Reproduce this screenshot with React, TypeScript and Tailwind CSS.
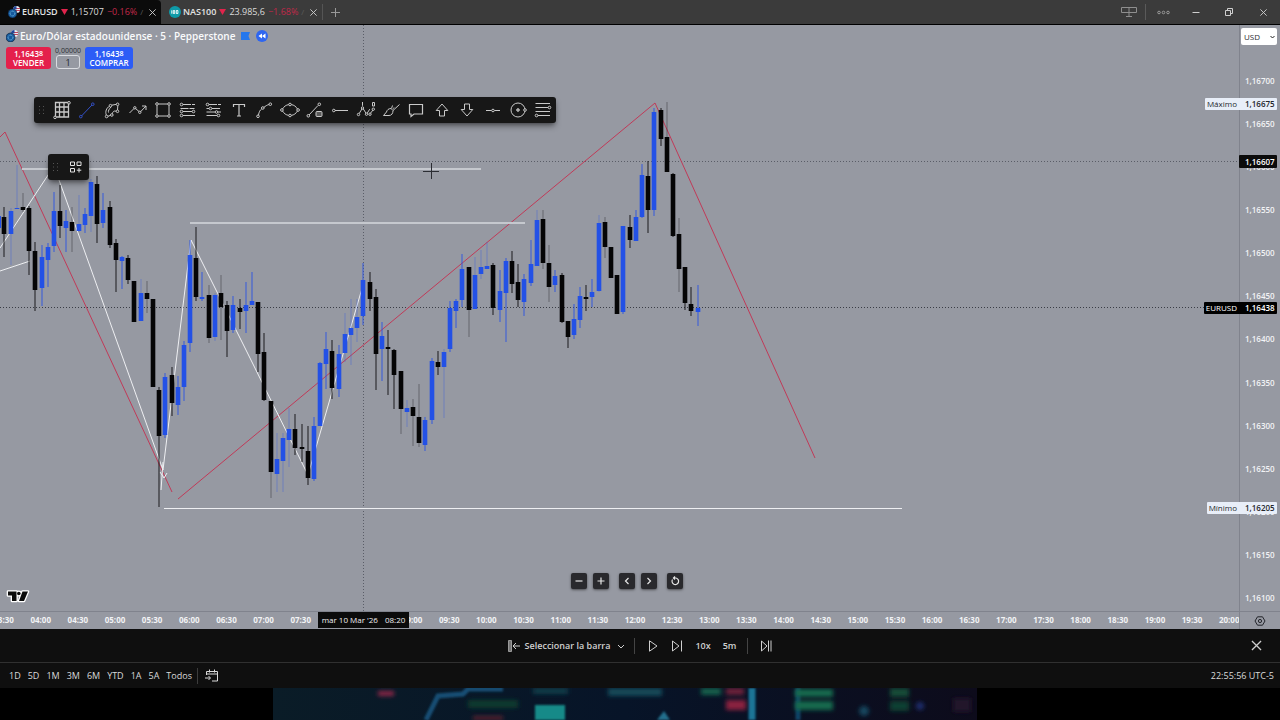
import { useState } from "react";
import type { ReactNode } from "react";
import clsx from "clsx";

type Candle = [high: number, top: number, bottom: number, low: number, up: 0 | 1];

const CANDLE_STEP = 6.19;
const CANDLE_START = 4.4;

const candles: Candle[] = [
  [207, 217, 234, 257, 0], [208, 211, 234, 265, 1], [165, 208, 209, 209, 1], [193, 207, 210, 212, 0],
  [206, 208, 251, 275, 0], [242, 251, 290, 311, 0], [245, 257, 288, 306, 1], [243, 247, 260, 287, 1],
  [192, 211, 246, 252, 1], [185, 211, 226, 238, 0], [210, 221, 228, 252, 1], [207, 222, 231, 252, 0],
  [195, 224, 231, 232, 1], [208, 214, 225, 233, 1], [179, 182, 216, 232, 1], [176, 184, 224, 243, 0],
  [193, 210, 223, 228, 1], [201, 207, 245, 248, 0], [239, 243, 260, 292, 0], [256, 257, 261, 289, 1],
  [255, 258, 280, 284, 0], [281, 281, 322, 322, 0], [279, 293, 321, 321, 1], [281, 293, 299, 313, 0],
  [299, 299, 387, 387, 0], [387, 390, 436, 507, 0], [373, 377, 435, 438, 1], [367, 375, 403, 416, 0],
  [376, 387, 405, 415, 1], [341, 345, 387, 401, 1], [240, 255, 343, 352, 1], [227, 258, 297, 301, 0],
  [272, 297, 299, 301, 1], [285, 295, 338, 343, 0], [293, 295, 337, 341, 1], [275, 293, 307, 340, 0],
  [301, 305, 331, 357, 0], [296, 305, 330, 333, 1], [299, 308, 312, 329, 0], [282, 305, 311, 333, 1],
  [272, 301, 305, 305, 1], [302, 302, 354, 372, 0], [333, 352, 400, 401, 0], [401, 401, 472, 498, 0],
  [433, 459, 474, 492, 1], [433, 438, 461, 492, 1], [408, 429, 440, 467, 1], [414, 429, 448, 455, 0],
  [424, 447, 449, 462, 0], [426, 451, 478, 485, 0], [417, 426, 479, 481, 1], [362, 363, 426, 426, 1],
  [332, 349, 364, 389, 1], [340, 351, 388, 399, 0], [345, 354, 389, 397, 1], [313, 334, 353, 362, 1],
  [299, 328, 335, 365, 1], [299, 317, 328, 342, 1], [263, 280, 316, 325, 1], [272, 282, 299, 311, 0],
  [289, 297, 354, 390, 0], [322, 336, 349, 381, 1], [330, 347, 349, 395, 0], [349, 350, 375, 409, 0],
  [371, 371, 409, 434, 0], [400, 408, 412, 427, 1], [399, 407, 416, 446, 0], [384, 417, 443, 447, 0],
  [417, 420, 445, 451, 1], [358, 361, 420, 424, 1], [351, 362, 367, 375, 0], [349, 352, 367, 418, 1],
  [301, 308, 349, 352, 1], [299, 301, 311, 328, 1], [254, 269, 300, 307, 1], [267, 267, 310, 337, 0],
  [257, 275, 309, 309, 1], [250, 267, 274, 279, 1], [242, 266, 269, 269, 1], [263, 265, 308, 315, 0],
  [270, 291, 310, 322, 1], [258, 261, 293, 342, 1], [251, 261, 284, 293, 0], [264, 282, 300, 307, 0],
  [274, 279, 302, 316, 1], [240, 264, 283, 286, 1], [210, 220, 266, 266, 1], [210, 219, 263, 269, 0],
  [245, 263, 287, 302, 0], [270, 276, 285, 292, 1], [273, 275, 322, 323, 0], [321, 321, 337, 348, 0],
  [304, 319, 335, 339, 1], [287, 296, 320, 328, 1], [285, 297, 299, 311, 0], [279, 292, 297, 307, 1],
  [215, 223, 291, 292, 1], [217, 222, 247, 258, 0], [247, 247, 278, 278, 0], [275, 275, 314, 314, 0],
  [226, 226, 312, 314, 1], [215, 227, 240, 248, 0], [210, 217, 241, 241, 1], [164, 175, 217, 218, 1],
  [161, 176, 210, 233, 0], [108, 112, 210, 216, 1], [108, 110, 139, 146, 0], [102, 137, 172, 172, 0],
  [173, 174, 236, 237, 0], [218, 234, 269, 292, 0], [267, 267, 303, 310, 0], [287, 304, 311, 316, 0],
  [285, 308, 312, 326, 1],
];

// bars whose wicks are drawn lighter
const softWicks = new Set([1, 2, 3, 11, 12, 14, 22, 23, 33, 34, 35, 43, 44, 45, 46, 55, 56, 57, 64, 65, 66, 67, 71, 75, 76, 77, 78, 86, 87, 88, 96, 97, 107, 109]);

const prices = ["1,16700", "1,16650", "1,16600", "1,16550", "1,16500", "1,16450", "1,16400", "1,16350", "1,16300", "1,16250", "1,16200", "1,16150", "1,16100"];

const times = Array.from({ length: 34 }, (_, i) => {
  const minutes = 210 + i * 30;
  return `${String(Math.floor(minutes / 60)).padStart(2, "0")}:${minutes % 60 === 0 ? "00" : "30"}`;
});

// ticks covered by the crosshair date
const coveredTimes = ["08:00", "08:30"];

const ranges = ["1D", "5D", "1M", "3M", "6M", "YTD", "1A", "5A", "Todos"];

function Icon({ size = 20, className, children }: { size?: number; className?: string; children: ReactNode }) {
  return (
    <svg width={size} height={size} viewBox={`0 0 ${size} ${size}`} fill="none" stroke="currentColor" strokeWidth="1" className={clsx("block shrink-0", className)} aria-hidden="true">
      {children}
    </svg>
  );
}

const tools: { name: string; icon: ReactNode }[] = [
  { name: "Cuadrícula", icon: <><path d="M3.5 2.5h13v14.5h-13zM7.5 2.5V17M12 2.5V17M3.5 7h13M3.5 12h13" strokeWidth="1.3" /><circle cx="17" cy="2.8" r="1.3" fill="#171717" /><circle cx="3" cy="17.4" r="1.3" fill="#171717" /></> },
  { name: "Línea de tendencia", icon: <><path d="M4.5 16 15 5" /><circle cx="3.8" cy="16.6" r="1.3" /><circle cx="15.8" cy="4.2" r="1.3" /></> },
  { name: "Curva cerrada", icon: <><path d="M4.300 15C3 11.500 4.500 8 7.300 6.300M9.800 5.200 14 4.400M15.800 5.800 15.500 10M14.200 11.200C12 10.500 10.800 11.500 10.300 13.800M8.500 15.300 6 16.300" /><path d="M9 7c-2 2-3 4-2.500 5.500" /><circle cx="8.500" cy="5.700" r="1.300" /><circle cx="15.600" cy="4.300" r="1.300" /><circle cx="15.500" cy="11.300" r="1.300" /><circle cx="9.800" cy="15" r="1.300" /><circle cx="4.600" cy="16.500" r="1.300" /></> },
  { name: "Polilínea", icon: <><path d="M1.500 13 6 8.500M7.500 8.500l3.500 3M12.500 11.800 18 6M14 6h4v4" /><circle cx="6.800" cy="7.800" r="1.200" /><circle cx="11.800" cy="12.300" r="1.200" /></> },
  { name: "Rectángulo", icon: <><path d="M5.500 4h9M5.500 16h9M4 5.500v9M16 5.500v9" /><circle cx="4" cy="4" r="1.300" /><circle cx="16" cy="4" r="1.300" /><circle cx="4" cy="16" r="1.300" /><circle cx="16" cy="16" r="1.300" /></> },
  { name: "Retroceso de Fibonacci", icon: <><path d="M5 4.500H17M2.500 8.500h14" strokeDasharray="8 1" /><path d="M5 11.500h9M5 15.500H17" /><circle cx="3.500" cy="4.500" r="1.300" /><circle cx="15.500" cy="11.500" r="1.300" /><circle cx="3.500" cy="11.500" r="1.300" /><circle cx="3.500" cy="15.500" r="1.300" /></> },
  { name: "Extensión de Fibonacci", icon: <><path d="M5 4.500H17M8 8.500h9" strokeDasharray="8 1" /><path d="M2.500 8.500h2.500M2.500 12h8.500M14 12h3M2.500 15.500H13" /><circle cx="3.500" cy="4.500" r="1.300" /><circle cx="6.500" cy="8.500" r="1.300" /><circle cx="12.500" cy="12" r="1.300" /><circle cx="14.500" cy="15.500" r="1.300" /></> },
  { name: "Texto", icon: <path d="M4.500 7V4.500h11V7M10 4.500v11.500M8 16h4" strokeWidth="1.200" /> },
  { name: "Curva", icon: <><path d="M4.500 15C5 12 6 10 7.800 8.800M9.800 7.500C11.500 6 13 5 15 4.500" /><circle cx="4" cy="16.300" r="1.300" /><circle cx="8.800" cy="8" r="1.300" /><circle cx="16.300" cy="4.200" r="1.300" /></> },
  { name: "Elipse", icon: <><path d="M2.500 9C4 6.500 6 5 8.700 4.600M11.300 4.600C14 5 16 6.500 17.500 9M17.500 11c-1.500 2.500-3.500 4-6.200 4.400M8.700 15.400C6 15 4 13.500 2.500 11" /><circle cx="10" cy="4.500" r="1.300" /><circle cx="10" cy="15.500" r="1.300" /><circle cx="1.900" cy="10" r="1.300" /><circle cx="18.100" cy="10" r="1.300" /></> },
  { name: "Línea con información", icon: <><path d="M4 15 13 5.500" /><circle cx="3.300" cy="15.800" r="1.300" /><circle cx="14.300" cy="4.300" r="1.300" /><rect x="11" y="11.500" width="6" height="5" rx="1" fill="#5b5b5b" /></> },
  { name: "Rayo horizontal", icon: <><path d="M5 10.500h13" /><circle cx="3.800" cy="10.500" r="1.300" /></> },
  { name: "Ondas de Elliott", icon: <><path d="M3.200 13.500 6 8.800M7.200 8.800l2.800 4.400M11.200 13.200l2.500-4M14.500 13.200 17 10M6.500 2v3.800M16.500 2.500h2v3.500h-2z" /><circle cx="2.500" cy="14.500" r="1.200" /><circle cx="6.500" cy="8" r="1.200" /><circle cx="10.500" cy="14.200" r="1.200" /><circle cx="14" cy="14.200" r="1.200" /><circle cx="17.300" cy="9.200" r="1.200" /></> },
  { name: "Pincel", icon: <path d="M2.500 15.500H8c2.500 0 4-2 4-5L10 8.500C7.500 8.500 6 10 5.500 12zM12 10.500l6.500-6M10.500 8.500 11.500 5.500M12 8.800l1-1.300" /> },
  { name: "Comentario", icon: <path d="M3.500 4.500h13v9.500H8l-3 2.500V14H3.500z" strokeWidth="1.200" /> },
  { name: "Flecha arriba", icon: <path d="M10 4 15.800 10.500H12.500V16h-5v-5.500H4.200z" /> },
  { name: "Flecha abajo", icon: <path d="M10 16 4.200 9.500h3.300V4h5v5.500h3.300z" /> },
  { name: "Línea horizontal", icon: <><path d="M3 10.500h5.500M11.500 10.500H17" /><circle cx="10" cy="10.500" r="1.300" /></> },
  { name: "Círculo", icon: <><circle cx="10" cy="10" r="7" /><circle cx="10" cy="10" r="1.300" fill="#8a8a8a" /><circle cx="17" cy="10" r="1.300" fill="#171717" /></> },
  { name: "Niveles", icon: <><path d="M2.500 3.500h14.500M2.500 7.500h12.500M2.500 11.500h14.500M5 15.500h12" strokeWidth="1.200" /><circle cx="16.500" cy="7.500" r="1.300" /><circle cx="3.500" cy="15.500" r="1.300" /></> },
];

function PairLogo() {
  return (
    <svg width="12" height="12" viewBox="0 0 12 12" className="shrink-0" aria-hidden="true">
      <circle cx="8.500" cy="3.500" r="3.500" fill="#e9edf5" />
      <path d="M8 2.500h4M8 4.500h4" stroke="#c0455a" strokeWidth="1" />
      <path d="M5 3.500a3.500 3.500 0 0 1 3.500-3.500v3.500z" fill="#23479b" />
      <circle cx="4.500" cy="7.500" r="4.500" fill="#16599c" stroke="#0e1a2b" strokeWidth=".6" />
      <circle cx="4.500" cy="7.500" r="2.400" fill="none" stroke="#79c3e6" strokeWidth=".9" strokeDasharray="1 .6" />
    </svg>
  );
}

function IndexLogo() {
  return (
    <svg width="12" height="12" viewBox="0 0 12 12" className="shrink-0" aria-hidden="true">
      <circle cx="6" cy="6" r="6" fill="#0f9aa8" />
      <path d="M2.800 4.300v3.400M4.300 4.500h1.400v3H4.300zM7.300 4.500h1.600v3H7.300z" fill="none" stroke="#fff" strokeWidth=".9" />
    </svg>
  );
}

function CloseGlyph({ size = 9 }: { size?: number }) {
  return (
    <svg width={size} height={size} viewBox="0 0 10 10" fill="none" stroke="currentColor" strokeWidth="1" aria-hidden="true">
      <path d="M1.500 1.500l7 7M8.500 1.500l-7 7" />
    </svg>
  );
}

function Tab({ logo, symbol, price, change, active }: { logo: ReactNode; symbol: string; price: string; change: string; active?: boolean }) {
  return (
    <div className={clsx("flex w-[161px] items-center justify-between pr-px pl-2", active ? "rounded-tr-sm bg-[#0b0b0b]" : "bg-transparent")}>
      <a href="#" className="flex items-center gap-[2px] whitespace-nowrap">
        {logo}
        <span className="text-[9px] font-semibold text-[#e4e4e4]">{symbol}</span>
        <svg width="7" height="6" viewBox="0 0 7 6" className="mx-px shrink-0" aria-hidden="true"><path d="M0 0h7L3.500 6z" fill="#e0244c" /></svg>
        <span className="text-[9px] font-medium text-[#dcdcdc]">{price}</span>
        <span className="ml-px text-[9px] font-medium text-[#c2284a]">{change}</span>
        <span className="ml-px text-[8px] text-[#5c5c5c]">/</span>
      </a>
      <button type="button" aria-label={`Cerrar ${symbol}`} className="flex w-4 items-center justify-center text-[#d0d0d0]">
        <CloseGlyph />
      </button>
    </div>
  );
}

function TopBar() {
  return (
    <header className="flex h-[25px] shrink-0 border-b border-black bg-[#3b3b3b]">
      <Tab active logo={<PairLogo />} symbol="EURUSD" price="1,15707" change="−0.16%" />
      <Tab logo={<IndexLogo />} symbol="NAS100" price="23.985,6" change="−1.68%" />
      <span className="my-1 w-px bg-[#555]" />
      <button type="button" aria-label="Nueva pestaña" className="flex w-6 items-center justify-center text-[#9a9a9a]">
        <svg width="9" height="9" viewBox="0 0 9 9" stroke="currentColor" aria-hidden="true"><path d="M4.500 0v9M0 4.500h9" /></svg>
      </button>
      <div className="ml-auto flex items-center text-[#cfcfcf]">
        <button type="button" aria-label="Disposición" className="flex w-8 justify-center text-[#8f8f8f]">
          <svg width="16" height="12" viewBox="0 0 16 12" fill="none" stroke="currentColor" aria-hidden="true"><path d="M.5 1.500h15v5H.5zM8 1.500v9M5 10.500h6" /></svg>
        </button>
        <span className="h-4 w-px bg-[#5a5a5a]" />
        <button type="button" aria-label="Más" className="flex w-[34px] justify-center text-[#9a9a9a]">
          <svg width="13" height="5" viewBox="0 0 13 5" fill="none" stroke="currentColor" aria-hidden="true"><circle cx="2" cy="2.500" r="1.300" /><circle cx="6.500" cy="2.500" r="1.300" /><circle cx="11" cy="2.500" r="1.300" /></svg>
        </button>
        <button type="button" aria-label="Minimizar" className="flex w-8 justify-center">
          <svg width="8" height="8" viewBox="0 0 8 8" stroke="currentColor" aria-hidden="true"><path d="M.5 4.500h7" /></svg>
        </button>
        <button type="button" aria-label="Restaurar" className="flex w-[34px] justify-center">
          <svg width="8" height="8" viewBox="0 0 8 8" fill="none" stroke="currentColor" aria-hidden="true"><path d="M.5 2.500h5v5h-5zM2.500 2.500v-2h5v5h-2" /></svg>
        </button>
        <button type="button" aria-label="Cerrar" className="flex w-[34px] justify-center">
          <CloseGlyph />
        </button>
      </div>
    </header>
  );
}

function PriceChart() {
  return (
    <svg viewBox="0 25 1239 586" preserveAspectRatio="none" className="absolute inset-0 h-full w-full" aria-label="EURUSD, velas de 5 minutos">
      <path d="M363.500 25v586M0 161.500h1239" stroke="#5a5d67" strokeDasharray="1 2" fill="none" />
      <path d="M0 307.500h1239" stroke="#3a3d46" strokeDasharray="1 2" fill="none" />
      <g fill="none" stroke="#c03a58" strokeWidth="1">
        <path d="M0 137 5 132 172 492" />
        <path d="M178 499 655 103 815 458" />
      </g>
      <g fill="none" stroke="#eeeff2" strokeWidth="1">
        <path d="M0 248 54 166 163 470 191 240 246 350 308 475 363 285" />
        <path d="M0 271 30 261M160 472 164 478 167 473M161 490 163 462" />
        <path d="M164 508.500H902" />
      </g>
      <path d="M22 169H481M190 223H525" stroke="#c5c8ce" strokeWidth="2" fill="none" />
      <rect x="0" y="216" width="1" height="12" fill="#2450e8" />
      {candles.map(([high, top, bottom, low, up], i) => {
        const x = Math.round(CANDLE_START + i * CANDLE_STEP);
        return (
          <g key={i} fill={up ? "#2351e6" : "#050506"}>
            <rect x={x - 0.5} y={high} width="1" height={low - high} opacity={softWicks.has(i) ? 0.35 : 0.85} />
            <rect x={x - 2.3} y={top} width="4.600" height={Math.max(bottom - top, 1)} />
          </g>
        );
      })}
      <path d="M423 171.500h16M431.500 163v16" stroke="#2b2d33" fill="none" />
    </svg>
  );
}

function Legend() {
  const [qty, setQty] = useState("1");
  return (
    <div className="absolute top-[5px] left-[6px] flex flex-col gap-1">
      <div className="flex h-3 items-center gap-[2px] whitespace-nowrap">
        <PairLogo />
        <h1 className="text-[10px] leading-3 font-semibold text-[#fafbfc]">Euro/Dólar estadounidense · 5 · Pepperstone</h1>
        <svg width="9" height="8" viewBox="0 0 9 8" className="ml-1" aria-hidden="true"><path d="M0 0h9L7.500 4 9 8H0z" fill="#2477ec" /></svg>
        <svg width="12" height="12" viewBox="0 0 12 12" className="ml-1" aria-hidden="true">
          <circle cx="6" cy="6" r="6" fill="#2f66f0" />
          <path d="M6 3.500v5L2.500 6zM9.500 3.500v5L6 6z" fill="#fff" />
        </svg>
      </div>
      <div className="flex items-end gap-[5px]">
        <button type="button" className="flex h-[22px] w-[45px] flex-col items-center justify-center rounded-[3px] bg-[#e4204b] text-[8px] leading-[9px] font-semibold text-white">
          <span>1,1643<span className="align-top text-[7px]">8</span></span>
          <span>VENDER</span>
        </button>
        <div className="flex w-6 flex-col items-center">
          <label htmlFor="qty" className="text-[7px] leading-[9px] text-[#2b2d33]">0,00000</label>
          <input id="qty" value={qty} onChange={(e) => setQty(e.target.value)} className="h-[14px] w-6 rounded-[3px] border border-[#d9dbe0] bg-transparent text-center text-[9px] text-[#24262c]" />
        </div>
        <button type="button" className="flex h-[22px] w-12 flex-col items-center justify-center rounded-[3px] bg-[#2c5cf6] text-[8px] leading-[9px] font-semibold text-white">
          <span>1,1643<span className="align-top text-[7px]">8</span></span>
          <span>COMPRAR</span>
        </button>
      </div>
    </div>
  );
}

function Grip() {
  return (
    <svg width="6" height="10" viewBox="0 0 6 10" fill="#555" aria-hidden="true">
      {[1, 4.5, 8].map((y) => (
        <g key={y}>
          <rect x="0" y={y} width="1" height="1" />
          <rect x="4" y={y} width="1" height="1" />
        </g>
      ))}
    </svg>
  );
}

function DrawingToolbar() {
  const [tool, setTool] = useState("Línea de tendencia");
  return (
    <div className="absolute top-[72px] left-[34px] flex h-[26px] w-[522px] items-center rounded-[3px] bg-[#171717] pl-[15px] shadow-md shadow-black/40">
      <span className="absolute left-[5px]"><Grip /></span>
      {tools.map((t) => (
        <button
          key={t.name}
          type="button"
          aria-label={t.name}
          className={clsx("flex flex-1 justify-center", tool === t.name ? "text-[#3350c8]" : "text-[#c9c9c9]")}
          onClick={() => setTool(t.name)}
        >
          <Icon>{t.icon}</Icon>
        </button>
      ))}
    </div>
  );
}

function FavoritesWidget() {
  return (
    <div className="absolute top-[129px] left-[48px] flex h-[26px] w-[41px] items-center justify-between rounded-[3px] bg-[#171717] pr-[7px] pl-[5px] shadow-md shadow-black/40">
      <Grip />
      <button type="button" aria-label="Añadir plantilla" className="text-[#e2e2e2]">
        <Icon size={12}><path d="M.5 1h4v3.500h-4zM7 1h4v3.500H7zM.5 7.500h4V11h-4zM9 7v4.500M6.800 9.200h4.500" /></Icon>
      </button>
    </div>
  );
}

function ZoomButton({ label, d, className }: { label: string; d: string; className?: string }) {
  return (
    <button type="button" aria-label={label} className={clsx("flex size-4 items-center justify-center rounded-[2px] bg-[#29292d] text-[#e6e6e6] shadow-sm shadow-black/40", className)}>
      <Icon size={10}><path d={d} strokeWidth="1.200" /></Icon>
    </button>
  );
}

function ZoomControls() {
  return (
    <div className="absolute bottom-[22px] left-[571px] flex">
      <ZoomButton label="Alejar" d="M1.500 5h7" />
      <ZoomButton label="Acercar" d="M1.500 5h7M5 1.500v7" className="ml-[6px]" />
      <ZoomButton label="Izquierda" d="M6.500 2 3.500 5l3 3" className="ml-[10px]" />
      <ZoomButton label="Derecha" d="M3.500 2l3 3-3 3" className="ml-[6px]" />
      <ZoomButton label="Restablecer" d="M2.500 3.500A3.300 3.300 0 1 0 6 2H3.500M5 .5 3.500 2 5 3.500" className="ml-[10px]" />
    </div>
  );
}

function ChartLogo() {
  return (
    <svg width="24" height="15" viewBox="0 0 24 15" className="absolute bottom-[7px] left-[6px]" aria-hidden="true">
      <g fill="#fff" stroke="#fff" strokeWidth="2.600" strokeLinejoin="round">
        <path d="M2 2.500h8.500v9.500H6V6.500H2zM16.500 2.500H22L18 12h-5z" />
        <circle cx="12.800" cy="4.500" r="1.800" />
      </g>
      <path d="M2 2.500h8.500v9.500H6V6.500H2zM16.500 2.500H22L18 12h-5z" fill="#0b0b0b" />
      <circle cx="12.800" cy="4.500" r="1.800" fill="#0b0b0b" />
    </svg>
  );
}

function PriceTag({ label, value, className }: { label?: string; value: string; className: string }) {
  return (
    <div className={clsx("absolute right-[3px] flex items-center justify-end rounded-[1px] text-[8px]", className)}>
      {label && <span className="px-[2px] font-medium">{label}</span>}
      <span className="w-[38px] pl-[6px] font-semibold">{value}</span>
    </div>
  );
}

function PriceAxis() {
  return (
    <aside className="flex w-[41px] shrink-0 flex-col border-l border-[#80838d] pt-[3px] pb-2">
      <div className="relative mr-[3px] ml-px flex">
        <select aria-label="Moneda" defaultValue="USD" className="h-[17px] w-full appearance-none rounded-[2px] bg-white pl-[3px] text-[8px] text-[#2b2d33]">
          <option>USD</option>
          <option>EUR</option>
        </select>
        <svg width="5" height="4" viewBox="0 0 5 4" fill="none" stroke="#222" className="pointer-events-none absolute top-[7px] right-[2px]" aria-hidden="true"><path d="M.5 1l2 2 2-2" /></svg>
      </div>
      <div className="mt-[31px] flex flex-1 flex-col justify-between pl-[5px] text-[8px] leading-[10px] font-semibold text-[#f2f3f5]">
        {prices.map((p) => <span key={p}>{p}</span>)}
      </div>
    </aside>
  );
}

function TimeAxis() {
  return (
    <div className="relative flex h-[18px] shrink-0 border-t border-[#80838d]">
      <div className="flex-1 overflow-hidden">
        <div className="-mr-[9px] -ml-[15px] flex h-full items-center pb-px text-[8px] font-bold text-[#f2f3f5]">
          {times.map((t) => <span key={t} className="flex-1 text-center">{!coveredTimes.includes(t) && t}</span>)}
        </div>
      </div>
      <button type="button" aria-label="Ajustes de escala" className="flex w-[41px] items-center justify-center border-l border-[#80838d] text-[#24262c]">
        <Icon size={12}><path d="M3.500 1.800h5L11 6l-2.500 4.200h-5L1 6z" /><circle cx="6" cy="6" r="1.600" /></Icon>
      </button>
      <div className="absolute top-0 left-[318px] flex h-4 w-[91px] items-center justify-center gap-[7px] bg-[#0b0b0b] text-[8px] font-medium text-[#f0f0f0]">
        <span>mar 10 Mar '26</span>
        <span>08:20</span>
      </div>
    </div>
  );
}

function ReplayBar() {
  return (
    <div className="grid h-[34px] shrink-0 grid-cols-[1fr_auto_1fr] items-center border-b border-[#303030] bg-[#0f0f0f] text-[#cfcfcf]">
      <span />
      <div className="flex items-center text-[9px] font-semibold">
        <button type="button" className="flex items-center gap-[5px]">
          <Icon size={12}><path d="M.5.5h3v11h-3z" fill="#777" stroke="#999" /><path d="M5 6h7M8 3 5 6l3 3" /></Icon>
          <span>Seleccionar la barra</span>
        </button>
        <button type="button" aria-label="Opciones de selección" className="ml-[6px]">
          <Icon size={10}><path d="M2 4l3 3 3-3" /></Icon>
        </button>
        <span className="ml-2 h-4 w-px bg-[#444]" />
        <button type="button" aria-label="Reproducir" className="ml-3">
          <Icon size={12}><path d="M2.500.8 10 6l-7.500 5.200z" /></Icon>
        </button>
        <button type="button" aria-label="Avanzar" className="ml-3">
          <Icon size={12}><path d="M1.500 1 8 6l-6.500 5zM10.500.5v11" /></Icon>
        </button>
        <button type="button" className="ml-3">10x</button>
        <button type="button" className="ml-3">5m</button>
        <span className="ml-[11px] h-4 w-px bg-[#444]" />
        <button type="button" aria-label="Ir a tiempo real" className="ml-3">
          <Icon size={12}><path d="M1.500 1 7 6l-5.500 5zM8.500.5v11M11 .5v11" /></Icon>
        </button>
      </div>
      <button type="button" aria-label="Cerrar repetición" className="mr-[17px] justify-self-end">
        <CloseGlyph size={13} />
      </button>
    </div>
  );
}

function RangeBar() {
  return (
    <div className="flex h-[25px] shrink-0 items-center bg-[#0f0f0f] pr-[6px] pl-[9px] text-[9px] font-medium text-[#dadada]">
      <div className="flex gap-[7px]">
        {ranges.map((r) => <button key={r} type="button">{r}</button>)}
      </div>
      <span className="ml-[5px] h-4 w-px bg-[#3c3c3c]" />
      <button type="button" aria-label="Ir a fecha" className="ml-[7px]">
        <Icon size={14}><path d="M1.500 6V2.500h11V12H7M1.500 5h11M4.500.5v3M9.500.5v3M0 9h5M3.500 7 5.500 9l-2 2" /></Icon>
      </button>
      <span className="ml-auto">22:55:56 UTC-5</span>
    </div>
  );
}

function Backdrop() {
  return (
    <div className="flex h-8 shrink-0 justify-center bg-black">
      <svg viewBox="0 0 704 32" preserveAspectRatio="none" className="mr-[30px] h-full w-[55%]" aria-hidden="true">
        <defs>
          <linearGradient id="night" x1="0" x2="1">
            <stop offset="0" stopColor="#0a1c27" />
            <stop offset=".5" stopColor="#071428" />
            <stop offset="1" stopColor="#0d0b1b" />
          </linearGradient>
          <filter id="soft"><feGaussianBlur stdDeviation="2" /></filter>
          <filter id="edge"><feGaussianBlur stdDeviation=".8" /></filter>
        </defs>
        <rect width="704" height="32" fill="url(#night)" />
        <g filter="url(#edge)">
          <path d="M153 32 165 8 190 6 195 1H230" fill="none" stroke="#174e73" strokeWidth="5" />
          <path d="M479 0v32" stroke="#1d7596" strokeWidth="7" />
          <path d="M525 0v32" stroke="#0f4566" strokeWidth="5" />
          <rect x="262" y="17" width="30" height="15" fill="#178a88" />
          <path d="M384 32l7-9 6 9z" fill="#22708d" />
        </g>
        <g filter="url(#soft)">
          <rect x="105" y="3" width="16" height="5" fill="#8a2847" />
          <rect x="195" y="12" width="50" height="8" fill="#0c3a2f" />
          <rect x="200" y="28" width="30" height="4" fill="#58202f" />
          <rect x="260" y="0" width="35" height="6" fill="#0e3d49" />
          <rect x="335" y="0" width="54" height="8" fill="#124a58" />
          <rect x="428" y="0" width="20" height="7" fill="#14614b" />
          <rect x="453" y="0" width="18" height="7" fill="#6d233b" />
          <rect x="453" y="12" width="20" height="10" fill="#8a2140" />
          <rect x="522" y="1" width="38" height="8" fill="#176b4e" />
          <rect x="522" y="13" width="38" height="9" fill="#176b4e" />
          <rect x="617" y="0" width="19" height="9" fill="#144c38" />
          <rect x="617" y="13" width="19" height="10" fill="#103f32" />
          <circle cx="591" cy="23" r="5" fill="#12465f" />
          <circle cx="647" cy="18" r="4" fill="#1e2e6c" />
          <rect x="680" y="10" width="18" height="14" fill="#22122a" />
        </g>
      </svg>
    </div>
  );
}

export default function App() {
  return (
    <div className="flex h-screen flex-col overflow-hidden bg-black font-['Open_Sans','Noto_Sans',sans-serif]">
      <TopBar />
      <main className="flex min-h-0 flex-1 flex-col bg-[#9699a2]">
        <div className="relative flex min-h-0 flex-1">
          <div className="relative min-w-0 flex-1 overflow-hidden">
            <PriceChart />
            <Legend />
            <DrawingToolbar />
            <FavoritesWidget />
            <ZoomControls />
            <ChartLogo />
          </div>
          <PriceAxis />
          <PriceTag label="Máximo" value="1,16675" className="top-[73px] h-3 bg-[#e8eef8] text-[#24262c]" />
          <PriceTag value="1,16607" className="top-[130px] h-[13px] bg-[#0b0b0b] text-white" />
          <PriceTag label="EURUSD" value="1,16438" className="top-[277px] h-3 bg-black text-white" />
          <PriceTag label="Mínimo" value="1,16205" className="top-[477px] h-3 bg-[#e8eef8] text-[#24262c]" />
        </div>
        <TimeAxis />
      </main>
      <ReplayBar />
      <RangeBar />
      <Backdrop />
    </div>
  );
}
